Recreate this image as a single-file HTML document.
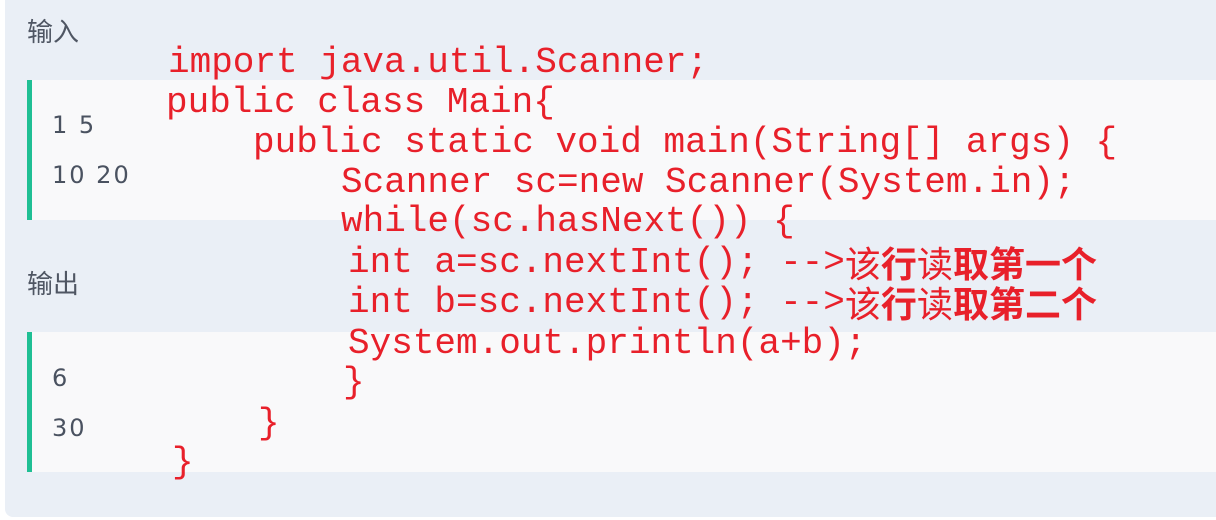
<!DOCTYPE html>
<html><head><meta charset="utf-8"><style>
html,body{margin:0;padding:0;width:1216px;height:520px;overflow:hidden;background:#fff;}
.panel{position:absolute;left:5px;top:-10px;width:1230px;height:527px;background:#eaeff6;border-radius:8px;}
.box{position:absolute;left:27px;width:1200px;background:#f9f9fa;border-left:5px solid #1fbf94;box-sizing:border-box;}
.lbl{position:absolute;left:27px;font:26px/1 "Noto Sans CJK SC",sans-serif;color:#4f5663;}
.num{position:absolute;left:52px;font:24px/1 "DejaVu Sans","Liberation Sans",sans-serif;color:#4a5260;letter-spacing:2px;}
.c{position:absolute;font:36px/40px "Liberation Mono",monospace;color:#e8202a;white-space:pre;}
.z{font-family:"Noto Sans CJK SC",sans-serif;font-size:36px;line-height:36px;vertical-align:top;position:relative;top:1px;}
.b{font-weight:600;}
</style></head><body>
<div class="panel"></div>
<div class="lbl" style="top:18px">输入</div>
<div class="box" style="top:80px;height:140px"></div>
<div class="num" style="top:113px">1 5</div>
<div class="num" style="top:163px">10 20</div>
<div class="lbl" style="top:270px">输出</div>
<div class="box" style="top:332px;height:140px"></div>
<div class="num" style="top:366px">6</div>
<div class="num" style="top:416px">30</div>

<div class="c" style="left:168px;top:43px">import java.util.Scanner;</div>
<div class="c" style="left:166px;top:83px">public class Main{</div>
<div class="c" style="left:253px;top:123px">public static void main(String[] args) {</div>
<div class="c" style="left:341px;top:163px">Scanner sc=new Scanner(System.in);</div>
<div class="c" style="left:341px;top:202px">while(sc.hasNext()) {</div>
<div class="c" style="left:348px;top:243px">int a=sc.nextInt(); --&gt;<span class="z">该<span class="b">行</span>读<span class="b">取第一个</span></span></div>
<div class="c" style="left:348px;top:283px">int b=sc.nextInt(); --&gt;<span class="z">该<span class="b">行</span>读<span class="b">取第二个</span></span></div>
<div class="c" style="left:348px;top:324px">System.out.println(a+b);</div>
<div class="c" style="left:343px;top:363px">}</div>
<div class="c" style="left:258px;top:404px">}</div>
<div class="c" style="left:172px;top:443px">}</div>
</body></html>
